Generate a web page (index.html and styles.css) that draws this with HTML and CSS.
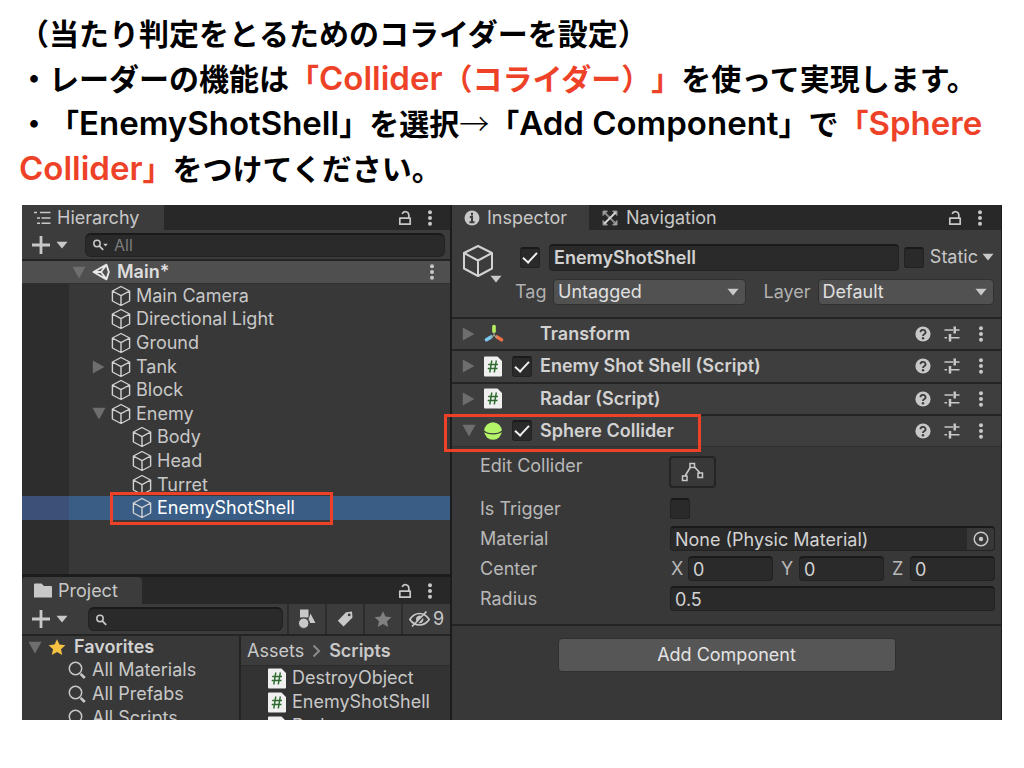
FILE: index.html
```html
<!DOCTYPE html>
<html lang="ja">
<head>
<meta charset="utf-8">
<title>コライダーの設定</title>
<link rel="stylesheet" href="styles.css">
</head>
<body>
<svg class="defs" aria-hidden="true">
  <symbol id="i-cube" viewBox="0 0 20 22"><path d="M10 1.5 18.6 6v10L10 20.5 1.4 16V6zM1.4 6 10 10.6 18.6 6M10 10.6v9.9" fill="none" stroke="#d2d2d2" stroke-width="1.4" stroke-linejoin="round"/></symbol>
  <symbol id="i-lock" viewBox="0 0 14 16"><path d="M1.8 8.2h10.4v6H1.8zM10.8 8V5a3.4 3.4 0 0 0-6.6-1" fill="none" stroke="#c8c8c8" stroke-width="1.7" stroke-linejoin="round"/></symbol>
  <symbol id="i-dots" viewBox="0 0 6 16"><g fill="#c8c8c8"><circle cx="3" cy="2.2" r="2"/><circle cx="3" cy="8" r="2"/><circle cx="3" cy="13.8" r="2"/></g></symbol>
  <symbol id="i-down" viewBox="0 0 12 8"><path d="M.5.8h11L6 7.4z" fill="currentColor"/></symbol>
  <symbol id="i-fold" viewBox="0 0 14 13"><path d="M.5.8h13L7 12.4z" fill="#6e6e6e"/></symbol>
  <symbol id="i-unfold" viewBox="0 0 13 14"><path d="M.8.5v13L12.4 7z" fill="#6e6e6e"/></symbol>
  <symbol id="i-plus" viewBox="0 0 18 18"><path d="M9 0v18M0 9h18" stroke="#c8c8c8" stroke-width="2.8"/></symbol>
  <symbol id="i-search" viewBox="0 0 14 12"><circle cx="5" cy="4.500" r="3.200" fill="none" stroke="#c8c8c8" stroke-width="1.500"/><path d="m7.200 6.800 4 4" stroke="#c8c8c8" stroke-width="1.800"/></symbol>
  <symbol id="i-find" viewBox="0 0 18 18"><circle cx="7.500" cy="7.500" r="6.200" fill="none" stroke="#c8c8c8" stroke-width="1.500"/><path d="m12.600 12.800 4.200 4.200" stroke="#c8c8c8" stroke-width="2.600"/></symbol>
  <symbol id="i-script" viewBox="0 0 18 21"><path d="M0 1.500A1 1 0 0 1 1 .5h12.500L18 5v14.500a1 1 0 0 1-1 1H1a1 1 0 0 1-1-1z" fill="#f0f0f0"/><path d="M7.800 4.500 5.800 16.500M12.300 4.500l-2 12M4.200 8.500h9.800M3.700 12.600h9.800" stroke="#2e6b2c" stroke-width="1.500" fill="none"/></symbol>
  <symbol id="i-help" viewBox="0 0 16 16"><circle cx="8" cy="8" r="7.600" fill="#c8c8c8"/><path d="M5.500 6.200a2.500 2.300 0 1 1 3.700 2C8.300 8.700 8 9 8 10" fill="none" stroke="#3c3c3c" stroke-width="1.800"/><circle cx="8" cy="12.300" r="1.200" fill="#3c3c3c"/></symbol>
  <symbol id="i-preset" viewBox="0 0 16 16"><path d="M.5 4h8.500M11 4h4.500M.5 11.700h2.500M6 11.700h9.500" stroke="#c8c8c8" stroke-width="1.500"/><path d="M10.700.5v7M6 8v7.500" stroke="#c8c8c8" stroke-width="2.500"/></symbol>
  <symbol id="i-star" viewBox="0 0 20 19"><path d="m10 .8 2.700 6 6.600.7-4.900 4.400 1.400 6.400L10 15l-5.800 3.300 1.400-6.400L.7 7.500l6.600-.7z" fill="currentColor"/></symbol>
</svg>

<header class="note">
  <p>（当たり判定をとるためのコライダーを設定）</p>
  <p>・レーダーの機能は<em>「<span class="lat">Collider</span>（コライダー）」</em>を使って実現します。</p>
  <p>・「<span class="lat">EnemyShotShell</span>」を選択<span class="arrow">→</span>「<span class="lat">Add Component</span>」で<em>「<span class="lat">Sphere</span></em></p>
  <p><em><span class="lat">Collider</span>」</em>をつけてください。</p>
</header>

<main class="editor">
  <div class="left">
    <section class="hierarchy">
      <div class="tabs">
        <div class="tab tab-h"><svg width="17" height="14" viewBox="0 0 17 14"><path d="M0 1.500h3M6 1.500h10.500M3 7h3M7.500 7h9M3 12.300h3M7.500 12.300h9" stroke="#c8c8c8" stroke-width="1.600"/></svg>Hierarchy</div>
        <div class="tab-tools"><svg width="14" height="16"><use href="#i-lock"/></svg><svg width="6" height="16"><use href="#i-dots"/></svg></div>
      </div>
      <div class="bar">
        <button class="add" aria-label="Create"><svg width="18" height="18"><use href="#i-plus"/></svg><svg width="12" height="8"><use href="#i-down"/></svg></button>
        <label class="search"><svg width="14" height="12"><use href="#i-search"/></svg><svg class="mini" width="5" height="4"><use href="#i-down"/></svg><input type="text" placeholder="All" aria-label="Search hierarchy"></label>
      </div>
      <div class="scene">
        <svg width="14" height="13"><use href="#i-fold"/></svg>
        <svg width="18" height="18" viewBox="0 0 18 18"><path d="M1.500 9 14.500 1.700 16.800 9l-2.300 7.300zM1.500 9h7.500M9 9l5.500-7.300M9 9l5.500 7.300" fill="none" stroke="#e8e8e8" stroke-width="1.900" stroke-linejoin="round"/></svg>
        <b>Main*</b>
        <svg class="end" width="6" height="16"><use href="#i-dots"/></svg>
      </div>
      <ul class="tree">
        <li><i></i><svg width="20" height="22"><use href="#i-cube"/></svg>Main Camera</li>
        <li><i></i><svg width="20" height="22"><use href="#i-cube"/></svg>Directional Light</li>
        <li><i></i><svg width="20" height="22"><use href="#i-cube"/></svg>Ground</li>
        <li><i><svg width="13" height="14"><use href="#i-unfold"/></svg></i><svg width="20" height="22"><use href="#i-cube"/></svg>Tank</li>
        <li><i></i><svg width="20" height="22"><use href="#i-cube"/></svg>Block</li>
        <li><i><svg width="14" height="13"><use href="#i-fold"/></svg></i><svg width="20" height="22"><use href="#i-cube"/></svg>Enemy</li>
        <li class="child"><i></i><svg width="20" height="22"><use href="#i-cube"/></svg>Body</li>
        <li class="child"><i></i><svg width="20" height="22"><use href="#i-cube"/></svg>Head</li>
        <li class="child"><i></i><svg width="20" height="22"><use href="#i-cube"/></svg>Turret</li>
        <li class="child selected"><i></i><svg width="20" height="22"><use href="#i-cube"/></svg>EnemyShotShell<span class="mark"></span></li>
      </ul>
    </section>

    <section class="project">
      <div class="tabs">
        <div class="tab tab-p"><svg width="18" height="15" viewBox="0 0 18 15"><path d="M0 1.500A1 1 0 0 1 1 .5h6.500L10 3h7a1 1 0 0 1 1 1v10.500H0z" fill="#c8c8c8"/></svg>Project</div>
        <div class="tab-tools"><svg width="14" height="16"><use href="#i-lock"/></svg><svg width="6" height="16"><use href="#i-dots"/></svg></div>
      </div>
      <div class="bar">
        <button class="add" aria-label="Create"><svg width="18" height="18"><use href="#i-plus"/></svg><svg width="12" height="8"><use href="#i-down"/></svg></button>
        <label class="search"><svg width="14" height="12"><use href="#i-search"/></svg><input type="text" aria-label="Search project"></label>
        <button class="filter" aria-label="Search by type"><svg width="18" height="20" viewBox="0 0 18 20"><path d="M2 .5h8.500v8H2zM12.500 4.500 17.500 14h-5.500a5.500 5.500 0 0 0-1.500-3.500z" fill="#c8c8c8"/><circle cx="5.700" cy="14.200" r="5.200" fill="#c8c8c8" stroke="#3c3c3c"/></svg></button>
        <button class="filter" aria-label="Search by label"><svg width="16" height="16" viewBox="0 0 16 16"><path fill-rule="evenodd" d="M9 1.200 15 .5l.5 6L6.500 15.500.8 9.800zM12.200 2.500a1.400 1.400 0 1 0 0 2.800 1.400 1.400 0 0 0 0-2.800z" fill="#c8c8c8"/></svg></button>
        <button class="filter dim" aria-label="Save search"><svg width="18" height="18"><use href="#i-star"/></svg></button>
        <button class="filter hidden-count"><svg width="21" height="18" viewBox="0 0 21 18"><path d="M.8 9.500C4 4.500 8 3.500 10.500 3.500s6.500 1 9.700 6c-3.200 4.500-7.200 5.500-9.700 5.500S4 14 .8 9.500zM3 16.500 17.500 1.500" fill="none" stroke="#c8c8c8" stroke-width="1.700"/><path d="M7 10a3.800 3.800 0 0 1 5.500-4L8 11.500zM9.500 13l4.700-5a3.800 3.800 0 0 1-4.700 5z" fill="#c8c8c8"/></svg>9</button>
      </div>
      <div class="browser">
        <ul class="favorites">
          <li class="fav-head"><svg width="14" height="13"><use href="#i-fold"/></svg><svg class="gold" width="18" height="18"><use href="#i-star"/></svg><b>Favorites</b></li>
          <li><svg width="18" height="18"><use href="#i-find"/></svg>All Materials</li>
          <li><svg width="18" height="18"><use href="#i-find"/></svg>All Prefabs</li>
          <li><svg width="18" height="18"><use href="#i-find"/></svg>All Scripts</li>
        </ul>
        <div class="assets">
          <nav class="crumbs">Assets<svg width="9" height="14" viewBox="0 0 9 14"><path d="m1.500 1.500 5.500 5.500-5.500 5.500" fill="none" stroke="#8c8c8c" stroke-width="2"/></svg><b>Scripts</b></nav>
          <ul>
            <li><svg width="18" height="21"><use href="#i-script"/></svg>DestroyObject</li>
            <li><svg width="18" height="21"><use href="#i-script"/></svg>EnemyShotShell</li>
            <li><svg width="18" height="21"><use href="#i-script"/></svg>Radar</li>
          </ul>
        </div>
      </div>
    </section>
  </div>

  <section class="inspector">
    <div class="tabs">
      <div class="tab tab-i"><svg width="16" height="16" viewBox="0 0 16 16"><circle cx="8" cy="8" r="7.500" fill="#c8c8c8"/><path d="M8 2.800v2.600M5.800 7H8v5M5.500 12.200h5" stroke="#3c3c3c" stroke-width="2" fill="none"/></svg>Inspector</div>
      <div class="tab tab-n"><svg width="16" height="16" viewBox="0 0 16 16"><path d="M1 1h4.500L1 5.500zM15 1v4.500L10.500 1zM1 15v-4.500L5.500 15zM15 15h-4.500l4.500-4.500z" fill="#b4b4b4" stroke="#8c8c8c"/><path d="m2.500 2.500 11 11" stroke="#8c8c8c" stroke-width="1.800"/><path d="M2.500 13.500l11-11" stroke="#d8d8d8" stroke-width="1.800"/></svg>Navigation</div>
      <div class="tab-tools"><svg width="14" height="16"><use href="#i-lock"/></svg><svg width="6" height="16"><use href="#i-dots"/></svg></div>
    </div>
    <div class="object">
      <div class="object-icon"><svg width="32" height="34" viewBox="0 0 32 34"><path d="M16 2 30 9v15.500L16 32 2 24.500V9zM2 9l14 7.500L30 9M16 16.500V32" fill="none" stroke="#d2d2d2" stroke-width="2" stroke-linejoin="round"/></svg><svg class="corner" width="12" height="8"><use href="#i-down"/></svg></div>
      <div class="object-fields">
        <div class="line">
          <input class="check" type="checkbox" checked aria-label="Active">
          <input class="field name" type="text" value="EnemyShotShell" aria-label="Name">
          <input class="check" type="checkbox" id="static">
          <label class="static" for="static">Static<svg width="12" height="8"><use href="#i-down"/></svg></label>
        </div>
        <div class="line second">
          <label for="tag">Tag</label>
          <span class="drop drop-tag"><select id="tag"><option>Untagged</option></select><svg width="12" height="8"><use href="#i-down"/></svg></span>
          <label class="layer" for="layer">Layer</label>
          <span class="drop drop-layer"><select id="layer"><option>Default</option></select><svg width="12" height="8"><use href="#i-down"/></svg></span>
        </div>
      </div>
    </div>
    <div class="components">
      <div class="comp"><svg width="13" height="14"><use href="#i-unfold"/></svg>
        <svg width="20" height="20" viewBox="0 0 20 20"><g fill="none" stroke-width="3.600" stroke-linecap="round"><path d="M10 2.500v5" stroke="#b8f060"/><path d="m7 13-4.500 2.700" stroke="#7cc8f0"/><path d="m13 13 4.500 2.700" stroke="#f07048"/></g><path d="M10 8v3.500l-3.500 2M10 11.500l3.500 2" stroke="#a0a890" stroke-width="1.200" fill="none"/></svg>
        <span></span><b>Transform</b><svg width="16" height="16"><use href="#i-help"/></svg><svg width="16" height="16"><use href="#i-preset"/></svg><svg width="6" height="16"><use href="#i-dots"/></svg></div>
      <div class="comp"><svg width="13" height="14"><use href="#i-unfold"/></svg><svg width="18" height="21"><use href="#i-script"/></svg>
        <input class="check" type="checkbox" checked aria-label="Enemy Shot Shell enabled"><b>Enemy Shot Shell (Script)</b><svg width="16" height="16"><use href="#i-help"/></svg><svg width="16" height="16"><use href="#i-preset"/></svg><svg width="6" height="16"><use href="#i-dots"/></svg></div>
      <div class="comp"><svg width="13" height="14"><use href="#i-unfold"/></svg><svg width="18" height="21"><use href="#i-script"/></svg>
        <span></span><b>Radar (Script)</b><svg width="16" height="16"><use href="#i-help"/></svg><svg width="16" height="16"><use href="#i-preset"/></svg><svg width="6" height="16"><use href="#i-dots"/></svg></div>
      <div class="comp"><svg width="14" height="13"><use href="#i-fold"/></svg>
        <svg width="18" height="18" viewBox="0 0 18 18"><circle cx="9" cy="9" r="8.800" fill="#b4f468"/><path d="M0 9.200c4 3.600 14 3.600 18 0" fill="none" stroke="#3c3c3c" stroke-width="1.400"/></svg>
        <input class="check" type="checkbox" checked aria-label="Sphere Collider enabled"><b>Sphere Collider</b><svg width="16" height="16"><use href="#i-help"/></svg><svg width="16" height="16"><use href="#i-preset"/></svg><svg width="6" height="16"><use href="#i-dots"/></svg><span class="mark"></span></div>
    </div>
    <div class="props">
      <div class="prop tall"><span>Edit Collider</span><button class="edit" aria-label="Edit Collider"><svg width="23" height="20" viewBox="0 0 23 20"><path d="M4 14 9.500 5M13.500 5 19 11" fill="none" stroke="#c8c8c8" stroke-width="1.600"/><path d="M9 1.500h4.500v4H9zM1.500 14H6v4.500H1.500zM17 11h4.500v4.500H17z" fill="none" stroke="#c8c8c8" stroke-width="1.500"/></svg></button></div>
      <div class="prop"><label for="trigger">Is Trigger</label><input class="check" type="checkbox" id="trigger"></div>
      <div class="prop"><label for="material">Material</label><div class="object-ref"><input class="field" id="material" type="text" value="None (Physic Material)"><button aria-label="Pick material"><svg width="16" height="16" viewBox="0 0 16 16"><circle cx="8" cy="8" r="6.800" fill="none" stroke="#c8c8c8" stroke-width="1.500"/><circle cx="8" cy="8" r="2.200" fill="#c8c8c8"/></svg></button></div></div>
      <div class="prop"><span>Center</span><div class="vector"><label for="cx">X</label><input class="field" id="cx" type="text" value="0"><label for="cy">Y</label><input class="field" id="cy" type="text" value="0"><label for="cz">Z</label><input class="field" id="cz" type="text" value="0"></div></div>
      <div class="prop"><label for="radius">Radius</label><input class="field" id="radius" type="text" value="0.5"></div>
    </div>
    <div class="footer"><button class="add-component">Add Component</button></div>
  </section>
</main>
</body>
</html>
```
FILE: styles.css
```css
* { box-sizing: border-box; }
body { margin: 0; background: #fff; }
ul { list-style: none; margin: 0; padding: 0; }
svg { display: block; flex: none; }
button { border: 0; padding: 0; background: none; color: inherit; font: inherit; }
input, select { font: inherit; color: inherit; min-width: 0; }
b { font-weight: 600; }
.defs { position: absolute; width: 0; height: 0; }

.note {
  padding: 10px 0 15px 19px;
  font: 700 30px/45px "Noto Sans CJK JP", sans-serif;
  color: #000;
  white-space: nowrap;
  text-spacing-trim: space-all;
}
.note p { margin: 0; height: 45px; }
.note em { font-style: normal; color: #ee4228; }
.lat { font: 600 33px/30px Inter, sans-serif; }
.arrow { font-weight: 300; line-height: 30px; }

.editor {
  display: grid;
  grid-template-columns: minmax(0, 428fr) minmax(0, 552fr);
  margin: 0 22px;
  background: #383838;
  color: #c8c8c8;
  font: 18px/24px Inter, sans-serif;
}
.left { display: flex; flex-direction: column; min-width: 0; }

.tabs { display: flex; align-items: center; height: 25px; background: #282828; }
.tab { display: flex; align-items: center; height: 100%; gap: 7px; padding-left: 12px; }
.tab-h { width: 142px; background: #3c3c3c; gap: 6px; }
.tab-p { width: 120px; background: #3c3c3c; border-radius: 4px 4px 0 0; gap: 6px; }
.tab-i { width: 137px; background: #3c3c3c; }
.tab-tools { display: flex; gap: 15px; margin-left: auto; padding-right: 17px; }

.bar { display: flex; align-items: center; height: 31px; background: #3c3c3c; border-bottom: 2px solid #242424; }
.add { display: flex; align-items: center; gap: 6px; padding-left: 10px; width: 63px; flex: none; }
.search {
  display: flex;
  align-items: center;
  flex: 1;
  min-width: 0;
  height: 24px;
  margin-right: 5px;
  padding-left: 6px;
  background: #2a2a2a;
  border: 1px solid #222;
  border-top: 2px solid #1a1a1a;
  border-radius: 6px;
}
.search input { flex: 1; border: 0; background: none; padding: 0 6px; height: 20px; outline: 0; font-size: 16px; }
.search input::placeholder { color: #7c7c7c; opacity: 1; }
.mini { margin-left: -3px; }

.hierarchy { flex: 1; background: linear-gradient(90deg, #2d2d2d 47px, #383838 47px); }
.scene { display: flex; align-items: center; gap: 6px; height: 23px; padding: 0 15px 0 50px; background: #4f4f4f; border-bottom: 1px solid #303030; color: #dedede; }
.scene b { padding-left: 1px; }
.end { margin-left: auto; }
.tree { display: grid; grid-auto-rows: 1fr; height: 236px; }
.tree li { display: flex; align-items: center; position: relative; gap: 5px; padding-left: 70px; line-height: 20px; }
.tree .child { padding-left: 91px; }
.tree i { width: 14px; }
.tree .selected { background: linear-gradient(90deg, #3c5078 47px, #3a5d86 47px); color: #fff; }
.mark { position: absolute; border: 3px solid #ee4228; pointer-events: none; }
.tree .mark { left: 88px; top: -4px; width: 223px; height: 33px; }

.project { border-top: 3px solid #1c1c1c; background: #282828; }
.project .tabs { height: 27px; }
.project .bar { height: 32px; align-items: stretch; }
.project .add { width: 66px; }
.project .search { margin: 3px 4px 3px 0; height: auto; }
.filter { display: grid; place-items: center; width: 38px; border-left: 2px solid #2c2c2c; flex: none; }
.dim { color: #808080; }
.hidden-count { display: flex; align-items: center; justify-content: center; gap: 3px; width: 49px; }
.browser { display: grid; grid-template-columns: 219px 1fr; height: 84px; overflow: hidden; }
.favorites { background: #383838; border-right: 2px solid #242424; }
.favorites li { display: flex; align-items: center; gap: 6px; padding-left: 46px; height: 24px; }
.favorites .fav-head { padding-left: 6px; height: 22px; color: #d2d2d2; }
.gold { color: #f5c142; margin-right: 2px; }
.assets { background: #333; }
.crumbs { display: flex; align-items: center; gap: 8px; height: 30px; padding-left: 6px; background: #3c3c3c; border-bottom: 1px solid #2c2c2c; }
.assets li { display: flex; align-items: center; gap: 6px; height: 24px; padding-left: 27px; }

.inspector { display: flex; flex-direction: column; border-left: 2px solid #1c1c1c; border-right: 1px solid #1c1c1c; }
.tab-n { padding-left: 13px; gap: 8px; }
.inspector .tab-tools { padding-right: 18px; }
.object { display: flex; gap: 15px; height: 87px; padding: 14px 7px 0 10px; background: #3c3c3c; }
.object-icon { position: relative; width: 38px; flex: none; }
.corner { position: absolute; right: -2px; top: 31px; }
.object-fields { flex: 1; min-width: 0; }
.line { display: flex; align-items: center; height: 26px; }
.second { margin-top: 9px; }
.check {
  appearance: none;
  display: grid;
  place-items: center;
  width: 20px;
  height: 21px;
  margin: 0;
  flex: none;
  background: #2a2a2a;
  border: 1px solid #222;
  border-top: 2px solid #1a1a1a;
  border-radius: 3px;
}
.check:checked::before { content: ""; width: 12px; height: 6px; margin-bottom: 4px; border: solid #f0f0f0; border-width: 0 0 2px 2px; transform: rotate(-47deg); }
.field {
  width: 100%;
  height: 25px;
  padding: 0 4px;
  background: #2a2a2a;
  border: 1px solid #222;
  border-top: 2px solid #1a1a1a;
  border-radius: 4px;
  color: #d2d2d2;
}
.line .check:first-child { margin-left: 5px; }
.name { flex: 1; margin: 0 5px 0 9px; height: 27px; font-weight: 600; }
.static { display: flex; align-items: center; gap: 4px; margin-left: 6px; }
.second label { width: 38px; flex: none; color: #b0b0b0; }
.second .layer { width: 54px; margin-left: 18px; }
.drop { display: grid; align-items: center; position: relative; height: 26px; color: #e0e0e0; }
.drop-tag { flex: 192; }
.drop-layer { flex: 176; }
.drop select { appearance: none; width: 100%; height: 26px; padding: 0 4px; background: #515151; border: 1px solid #303030; border-radius: 4px; }
.drop svg { position: absolute; right: 7px; pointer-events: none; color: #c8c8c8; }

.components { display: grid; grid-auto-rows: 1fr; height: 130px; background: #3e3e3e; border-bottom: 1px solid #303030; }
.comp { display: grid; grid-template-columns: 22px 28px 28px 1fr 29px 34px 6px; align-items: center; position: relative; padding: 0 17px 0 10px; border-top: 2px solid #242424; color: #d2d2d2; }
.comp .mark { left: -8px; top: -2px; width: 257px; height: 38px; }

.props { display: grid; gap: 5px; padding: 9px 6px 13px 28px; }
.prop { display: grid; grid-template-columns: 190px 1fr; align-items: center; height: 25px; color: #b8b8b8; }
.prop.tall { align-items: start; height: 35px; }
.prop.tall span { line-height: 20px; }
.edit { display: grid; place-items: center; width: 47px; height: 32px; margin-left: -1px; border: 2px solid #242424; border-radius: 4px; }
.object-ref { display: flex; position: relative; }
.object-ref button { position: absolute; right: 1px; top: 2px; display: grid; place-items: center; width: 27px; height: 22px; background: #383838; border-radius: 0 3px 3px 0; }
.vector { display: grid; grid-template-columns: 18px 1fr 26px 1fr 26px 1fr; align-items: center; }
.vector label { padding-left: 1px; }
.vector .field ~ label { padding-left: 8px; }
.footer { display: flex; justify-content: center; padding: 12px 0 48px; border-top: 2px solid #242424; }
.add-component { width: 338px; height: 34px; background: #565656; border: 1px solid #303030; border-radius: 4px; color: #e4e4e4; }
```
